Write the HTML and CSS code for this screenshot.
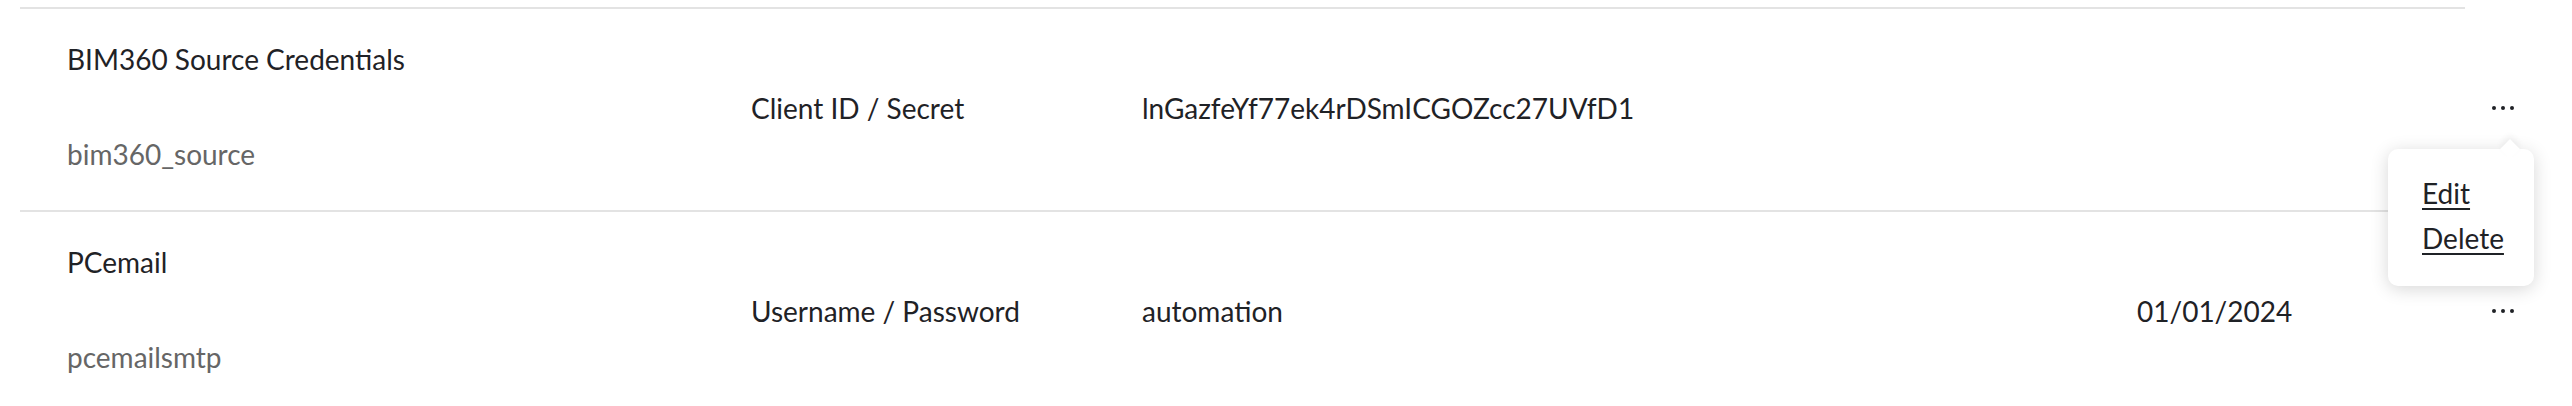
FILE: index.html
```html
<!DOCTYPE html>
<html lang="en">
<head>
<meta charset="utf-8">
<title>Credentials</title>
<link rel="stylesheet" href="styles.css">
</head>
<body>
<div class="table">
  <div class="row">
    <div class="cell name-cell">
      <span class="name">BIM360 Source Credentials</span>
      <span class="sub">bim360_source</span>
    </div>
    <div class="cell">Client ID / Secret</div>
    <div class="cell">lnGazfeYf77ek4rDSmICGOZcc27UVfD1</div>
    <div class="cell"></div>
    <div class="cell actions">
      <div class="menu-wrap">
        <span class="dots"><i></i><i></i><i></i></span>
        <div class="popup">
          <a class="popup-link" href="#">Edit</a>
          <a class="popup-link" href="#">Delete</a>
        </div>
      </div>
    </div>
  </div>
  <div class="row">
    <div class="cell name-cell">
      <span class="name">PCemail</span>
      <span class="sub">pcemailsmtp</span>
    </div>
    <div class="cell">Username / Password</div>
    <div class="cell">automation</div>
    <div class="cell">01/01/2024</div>
    <div class="cell actions">
      <div class="menu-wrap">
        <span class="dots"><i></i><i></i><i></i></span>
      </div>
    </div>
  </div>
</div>
</body>
</html>
```
FILE: styles.css
```css
html, body {
  margin: 0;
  padding: 0;
  background: #ffffff;
}
body {
  font-family: "Lato", "Open Sans", sans-serif;
  font-size: 28px;
  color: #1f2226;
  overflow: hidden;
}
.table {
  margin: 7px 0 0 20px;
  width: 2445px;
}
.row {
  display: grid;
  grid-template-columns: 731px 391px 995px 355px 60px;
  height: 203px;
  box-sizing: border-box;
  border-top: 2px solid #e3e3e3;
  align-items: center;
}
.cell {
  line-height: 40px;
  white-space: nowrap;
  padding-bottom: 3px;
}
.name-cell {
  display: flex;
  flex-direction: column;
  gap: 55px;
  padding: 30px 0 36px 47px;
  align-self: stretch;
}
.sub {
  color: #666666;
}
.actions {
  display: flex;
  align-items: center;
}
.menu-wrap {
  position: relative;
}
.dots {
  display: flex;
  align-items: center;
  gap: 5px;
  height: 24px;
}
.dots i {
  width: 4px;
  height: 4px;
  border-radius: 50%;
  background: #1f2226;
}
.popup {
  position: absolute;
  top: 53px;
  left: -104px;
  width: 146px;
  height: 137px;
  box-sizing: border-box;
  padding: 22px 34px 24px;
  background: #ffffff;
  border-radius: 10px;
  box-shadow: 0 3px 18px rgba(0, 0, 0, 0.16);
  display: flex;
  flex-direction: column;
  z-index: 2;
}
.popup::before {
  content: "";
  position: absolute;
  left: 115px;
  top: -7px;
  width: 14px;
  height: 14px;
  background: #ffffff;
  transform: rotate(45deg);
  box-shadow: -3px -3px 6px rgba(0, 0, 0, 0.06);
}
.popup-link {
  position: relative;
  color: #1f2226;
  line-height: 45px;
  text-decoration: underline;
  text-decoration-thickness: 2px;
  text-underline-offset: 4px;
}
```
